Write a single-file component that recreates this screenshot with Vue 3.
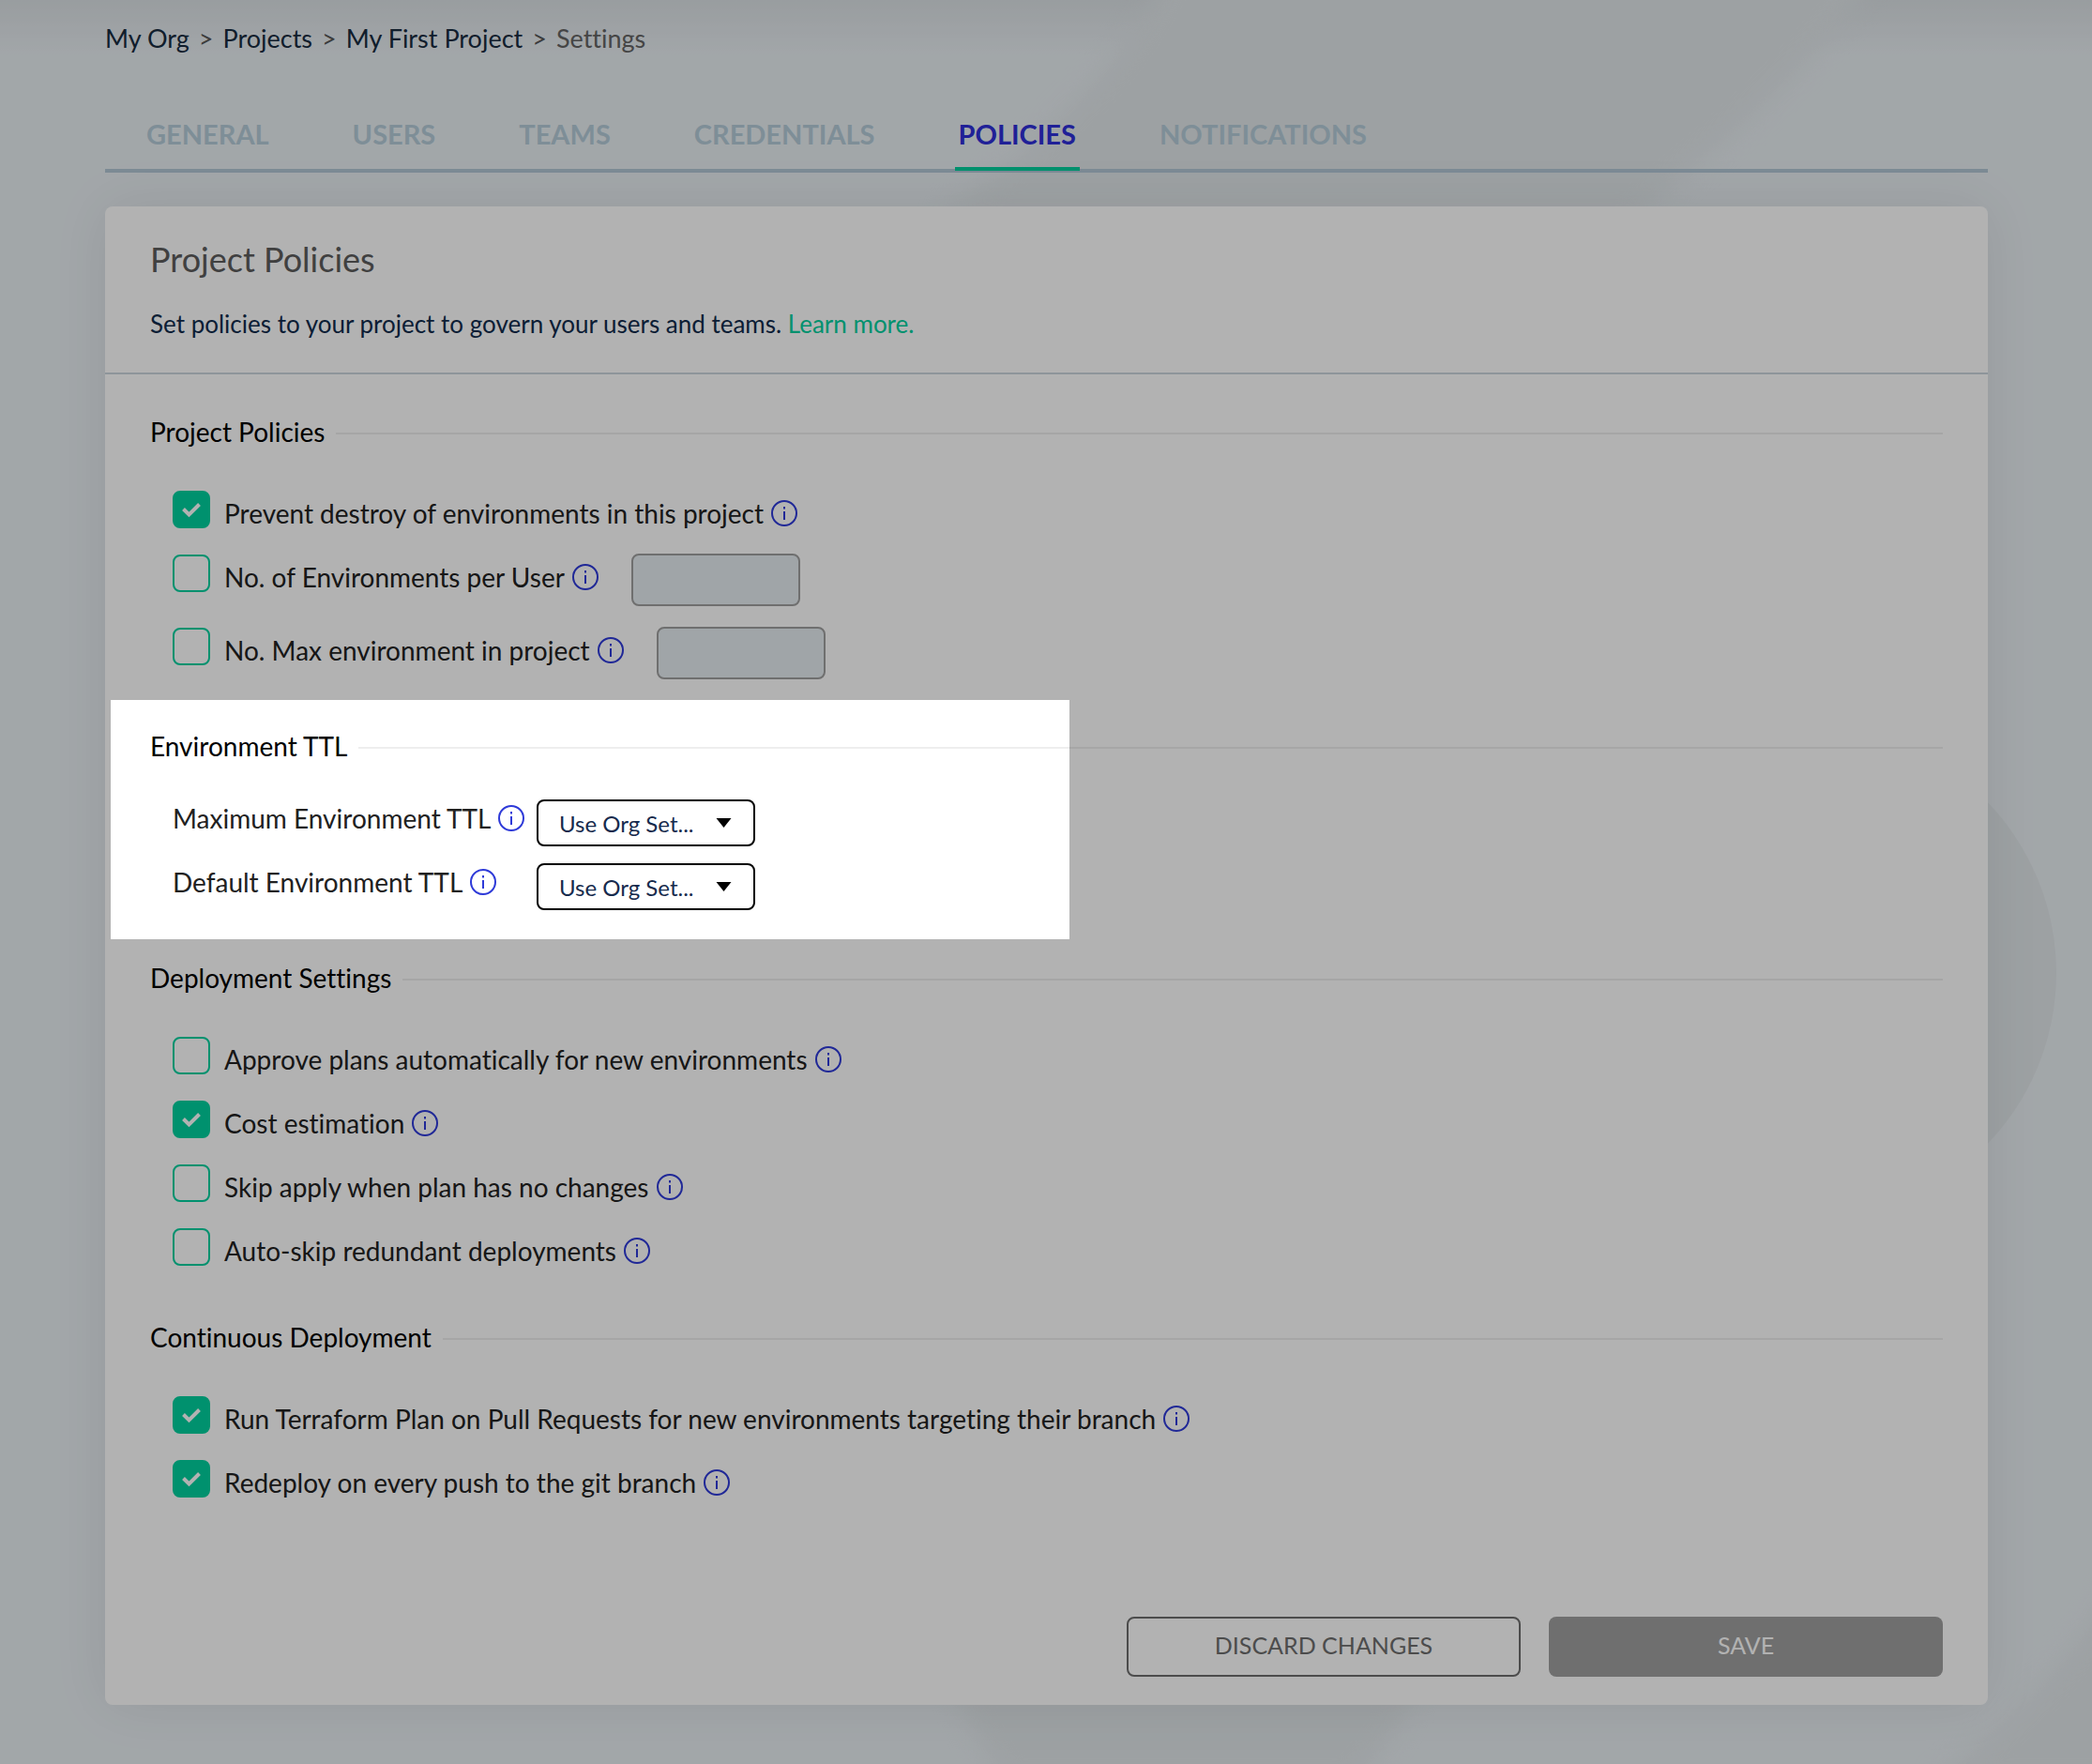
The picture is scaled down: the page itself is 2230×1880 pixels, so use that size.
<script setup>
import { reactive, ref } from "vue";

const crumbs = ["My Org", "Projects", "My First Project"];
const tabs = ["GENERAL", "USERS", "TEAMS", "CREDENTIALS", "POLICIES", "NOTIFICATIONS"];
const activeTab = ref("POLICIES");

const policies = reactive([
  { id: "prevent-destroy", label: "Prevent destroy of environments in this project", on: true },
  { id: "env-per-user", label: "No. of Environments per User", on: false, amount: "" },
  { id: "env-in-project", label: "No. Max environment in project", on: false, amount: "" },
]);
const ttls = reactive([
  { id: "max-ttl", label: "Maximum Environment TTL", value: "org" },
  { id: "default-ttl", label: "Default Environment TTL", value: "org" },
]);
const deployment = reactive([
  { id: "auto-approve", label: "Approve plans automatically for new environments", on: false },
  { id: "cost-estimation", label: "Cost estimation", on: true },
  { id: "skip-apply", label: "Skip apply when plan has no changes", on: false },
  { id: "skip-redundant", label: "Auto-skip redundant deployments", on: false },
]);
const continuous = reactive([
  { id: "plan-on-pr", label: "Run Terraform Plan on Pull Requests for new environments targeting their branch", on: true },
  { id: "redeploy", label: "Redeploy on every push to the git branch", on: true },
]);

const sections = [
  { title: "Project Policies", items: policies },
  { title: "Environment TTL", items: ttls, spotlight: true },
  { title: "Deployment Settings", items: deployment },
  { title: "Continuous Deployment", items: continuous },
];
</script>

<template>
  <div class="page">
    <svg class="backdrop" viewBox="0 0 2230 1880" preserveAspectRatio="xMidYMid slice" aria-hidden="true">
      <g class="soft">
        <path d="M1250 -40 C1200 60 1140 130 1000 230 L1745 230 C1840 150 1920 90 2010 -40 Z" />
        <path d="M1015 1790 Q1030 1840 1070 1900 L1445 1900 Q1490 1850 1515 1790 Z" />
        <path d="M2260 1680 Q2200 1790 2060 1900 L2260 1900 Z" />
      </g>
      <circle cx="1929" cy="1037" r="263" />
    </svg>

    <nav class="crumbs" aria-label="Breadcrumb">
      <template v-for="c in crumbs" :key="c">
        <a href="#">{{ c }}</a>
        <span>&gt;</span>
      </template>
      <span class="current">Settings</span>
    </nav>

    <nav class="tabs">
      <button
        v-for="t in tabs"
        :key="t"
        type="button"
        :class="{ active: t === activeTab }"
        @click="activeTab = t"
      >
        {{ t }}
      </button>
    </nav>

    <main class="card">
      <header class="head">
        <h1>Project Policies</h1>
        <p>Set policies to your project to govern your users and teams. <a href="#">Learn more.</a></p>
      </header>

      <form class="body" @submit.prevent>
        <section v-for="s in sections" :key="s.title" class="section" :class="{ spotlight: s.spotlight }">
          <h2>{{ s.title }}</h2>
          <div
            v-for="item in s.items"
            :key="item.id"
            class="row"
            :class="{ tall: 'amount' in item, ttl: 'value' in item }"
          >
            <span v-if="'on' in item" class="check">
              <input :id="item.id" v-model="item.on" type="checkbox" />
              <svg v-if="item.on" viewBox="0 0 40 40" aria-hidden="true">
                <path d="M11.5 19.5 L17.5 25.5 L28.5 14.5" />
              </svg>
            </span>
            <span class="text">
              <label :for="item.id">{{ item.label }}</label>
              <button type="button" class="info" :aria-label="'About ' + item.label">
                <svg viewBox="0 0 28 28" aria-hidden="true">
                  <circle cx="14" cy="14" r="13" />
                  <path d="M14 12 V21 M14 7 V9.5" />
                </svg>
              </button>
            </span>
            <input
              v-if="'amount' in item"
              v-model="item.amount"
              class="amount"
              type="text"
              :disabled="!item.on"
              :aria-label="item.label"
            />
            <span v-if="'value' in item" class="select">
              <select :id="item.id" v-model="item.value">
                <option value="org">Use Org Set...</option>
              </select>
              <svg viewBox="0 0 16 10" aria-hidden="true"><path d="M0 0 H16 L8 10 Z" /></svg>
            </span>
          </div>
        </section>

        <footer class="actions">
          <button type="button" class="discard">DISCARD CHANGES</button>
          <button type="submit" class="save">SAVE</button>
        </footer>
      </form>
    </main>
  </div>
</template>

<style>
body {
  margin: 0;
}
</style>

<style scoped>
* {
  box-sizing: border-box;
}
.page {
  position: relative;
  min-height: 100vh;
  padding: 20px 111px 62px 112px;
  overflow: hidden;
  background: #e9eff3;
  font-family: Lato, "Liberation Sans", sans-serif;
  font-size: 28px;
  font-variant-ligatures: none;
  color: #212121;
}
/* shadow cast by the app bar above */
.page::before {
  content: "";
  position: absolute;
  inset: 0 0 auto;
  height: 60px;
  background: linear-gradient(rgba(0, 0, 0, 0.06), transparent);
}
.backdrop {
  position: absolute;
  inset: 0;
  width: 100%;
  height: 100%;
  fill: #e1e7ea;
}
.soft {
  filter: blur(12px);
}
button {
  padding: 0;
  border: 0;
  background: none;
  font-family: inherit;
  cursor: pointer;
}
a {
  text-decoration: none;
}
.crumbs {
  position: relative;
  display: flex;
  gap: 10px;
  font-size: 27px;
  line-height: 42px;
  color: #555;
}
.crumbs a {
  color: #182b40;
}
.crumbs .current {
  color: #636363;
}
.tabs {
  position: relative;
  display: flex;
  gap: 81px;
  margin-top: 40px;
  padding: 0 40px;
  border-bottom: 4px solid #b3c7d6;
}
.tabs button {
  height: 80px;
  margin-bottom: -2px;
  padding: 4px 4px 0;
  border-bottom: 4px solid transparent;
  font-size: 29px;
  font-weight: 700;
  color: #b5ccd9;
}
.tabs button.active {
  border-color: #00d09e;
  color: #2e2ed8;
}
.card {
  position: relative;
  margin-top: 36px;
  border-radius: 8px;
  background: #fff;
  box-shadow: 0 0 60px rgba(0, 0, 0, 0.08);
}
.head {
  height: 179px;
  padding: 32px 48px 0;
  border-bottom: 2px solid #ccd6dd;
}
h1 {
  margin: 0;
  font-size: 36px;
  font-weight: 400;
  line-height: 48px;
  color: #5c5c5c;
}
.head p {
  margin: 27px 0 0;
  font-size: 26px;
  line-height: 36px;
  color: #112b4c;
}
.head a {
  color: #00d09e;
}
.body {
  padding: 47px 48px 30px;
}
.section {
  position: relative;
  margin-bottom: 48px;
}
.section h2 {
  display: flex;
  align-items: flex-end;
  gap: 12px;
  height: 32px;
  margin: 0 0 31px;
  font-size: 28px;
  font-weight: 400;
  line-height: 36px;
  color: #000;
}
.section h2::after {
  content: "";
  flex: 1;
  height: 2px;
  margin-bottom: 15px;
  background: #eee;
}
/* everything outside the highlighted block is dimmed */
.spotlight::before {
  content: "";
  position: absolute;
  z-index: 2;
  inset: -35px auto -21px -42px;
  width: 1022px;
  max-width: calc(100% + 84px);
  box-shadow: 0 0 0 9999px rgba(0, 0, 0, 0.3);
  pointer-events: none;
}
.row {
  display: flex;
  align-items: flex-start;
  height: 68px;
  padding: 13px 0 0 24px;
}
.row.tall {
  height: 78px;
}
.check {
  display: grid;
  flex: none;
  width: 40px;
  margin: 1px 15px 0 0;
}
.check > * {
  grid-area: 1 / 1;
  width: 40px;
  height: 40px;
}
.check input {
  appearance: none;
  margin: 0;
  border: 2px solid #00d09e;
  border-radius: 8px;
}
.check input:checked {
  background: #00d09e;
}
.check svg {
  fill: none;
  stroke: #fff;
  stroke-width: 4;
  pointer-events: none;
}
.text {
  display: flex;
  align-items: center;
  gap: 8px;
  height: 40px;
  margin-top: 5px;
}
.info {
  width: 28px;
  height: 28px;
}
.info svg {
  display: block;
  fill: none;
  stroke: #2e3ad8;
  stroke-width: 2;
}
.amount {
  width: 180px;
  height: 56px;
  margin-left: 35px;
  border: 2px solid #9f9f9f;
  border-radius: 8px;
  background: #e6edf1;
}
.row.ttl {
  padding-top: 8px;
}
.ttl .text {
  width: 388px;
  margin-top: 0;
}
.select {
  display: grid;
  align-items: center;
}
.select > * {
  grid-area: 1 / 1;
}
.select select {
  appearance: none;
  width: 233px;
  height: 50px;
  padding: 0 0 0 22px;
  border: 2px solid #000;
  border-radius: 8px;
  background: #fff;
  font-family: inherit;
  font-size: 24px;
  color: #172b4d;
}
.select svg {
  justify-self: end;
  width: 17px;
  height: 10px;
  margin-right: 25px;
  pointer-events: none;
}
.actions {
  display: flex;
  justify-content: flex-end;
  gap: 30px;
  padding-top: 65px;
}
.actions button {
  width: 420px;
  height: 64px;
  padding-bottom: 4px;
  border-radius: 8px;
  font-size: 25px;
}
.actions .discard {
  border: 2px solid #6e6e6e;
  color: #6e6e6e;
}
.actions .save {
  background: #9f9f9f;
  color: #fff;
}
</style>
